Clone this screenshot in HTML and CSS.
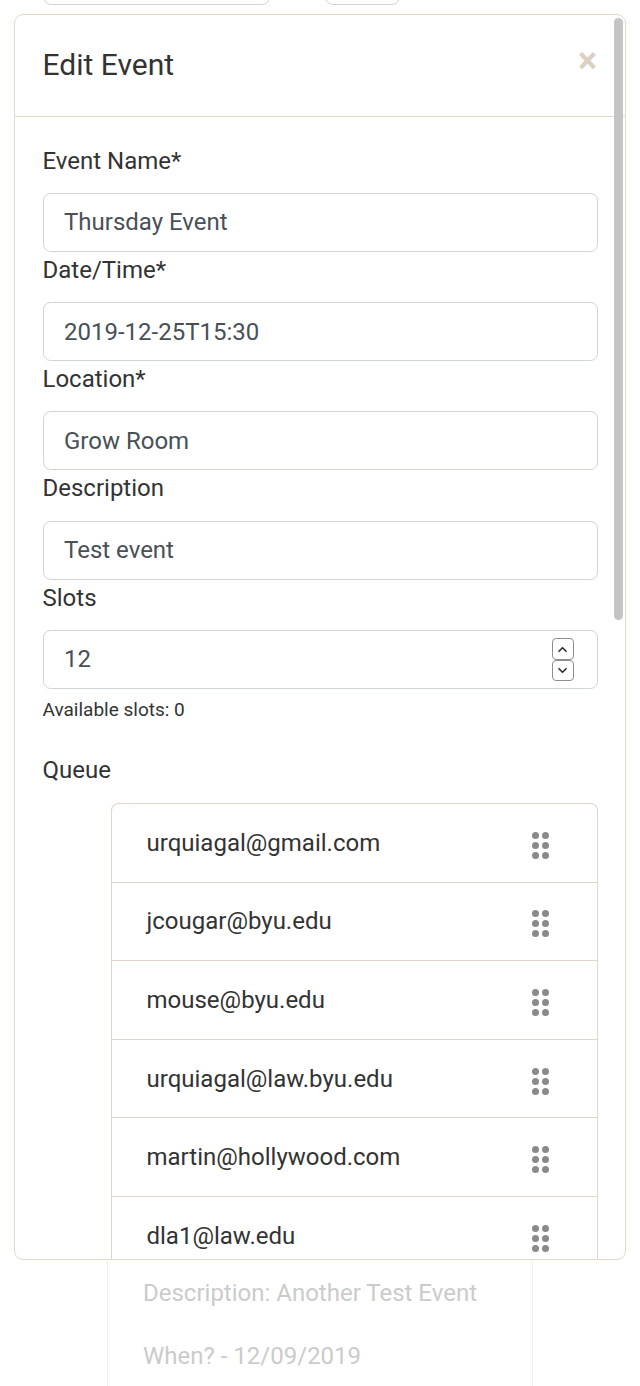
FILE: index.html
```html
<!DOCTYPE html>
<html lang="en">
<head>
<meta charset="utf-8">
<title>Edit Event</title>
<link rel="stylesheet" href="styles.css">
</head>
<body>
<div class="page">
  <div class="bg-top">
    <div class="bg-box bg-box-wide"></div>
    <div class="bg-box bg-box-small"></div>
  </div>
  <div class="bg-card">
    <p>Description: Another Test Event</p>
    <p>When? - 12/09/2019</p>
  </div>

  <div class="modal">
    <div class="modal-header">
      <h5 class="modal-title">Edit Event</h5>
      <span class="close">&times;</span>
    </div>
    <div class="modal-body">
      <label class="field-label">Event Name*</label>
      <input class="field-input" type="text" value="Thursday Event">
      <label class="field-label">Date/Time*</label>
      <input class="field-input" type="text" value="2019-12-25T15:30">
      <label class="field-label">Location*</label>
      <input class="field-input" type="text" value="Grow Room">
      <label class="field-label">Description</label>
      <input class="field-input" type="text" value="Test event">
      <label class="field-label">Slots</label>
      <div class="num-field">
        <input class="num-input" type="text" value="12">
        <div class="spinner">
          <span class="spin-btn">
            <svg viewBox="0 0 12 8" width="11" height="7"><path d="M2 6 L6 2 L10 6" fill="none" stroke="#333" stroke-width="2" stroke-linecap="round" stroke-linejoin="round"/></svg>
          </span>
          <span class="spin-btn">
            <svg viewBox="0 0 12 8" width="11" height="7"><path d="M2 2 L6 6 L10 2" fill="none" stroke="#333" stroke-width="2" stroke-linecap="round" stroke-linejoin="round"/></svg>
          </span>
        </div>
      </div>
      <small class="help">Available slots: 0</small>

      <label class="field-label queue-label">Queue</label>
      <ul class="queue">
        <li class="queue-item"><span>urquiagal@gmail.com</span><span class="handle"><i></i><i></i><i></i><i></i><i></i><i></i></span></li>
        <li class="queue-item"><span>jcougar@byu.edu</span><span class="handle"><i></i><i></i><i></i><i></i><i></i><i></i></span></li>
        <li class="queue-item"><span>mouse@byu.edu</span><span class="handle"><i></i><i></i><i></i><i></i><i></i><i></i></span></li>
        <li class="queue-item"><span>urquiagal@law.byu.edu</span><span class="handle"><i></i><i></i><i></i><i></i><i></i><i></i></span></li>
        <li class="queue-item"><span>martin@hollywood.com</span><span class="handle"><i></i><i></i><i></i><i></i><i></i><i></i></span></li>
        <li class="queue-item"><span>dla1@law.edu</span><span class="handle"><i></i><i></i><i></i><i></i><i></i><i></i></span></li>
      </ul>
    </div>
    <div class="scroll-thumb"></div>
  </div>
</div>
</body>
</html>
```

FILE: styles.css
```css
* { box-sizing: border-box; }

html, body {
  margin: 0;
  padding: 0;
  background: #fff;
}

body {
  font-family: Roboto, "Liberation Sans", Arial, sans-serif;
  color: #333;
}

.page {
  position: relative;
  width: 640px;
  height: 1386px;
  overflow: hidden;
}

/* background page (behind the modal) */
.bg-top {
  height: 5px;
  display: flex;
  align-items: flex-end;
  overflow: hidden;
  padding-left: 43px;
  gap: 55px;
}

.bg-box {
  flex: none;
  height: 40px;
  border: 1.5px solid #cdd5e0;
  border-radius: 8px;
}

.bg-box-wide { width: 227px; }
.bg-box-small { width: 75px; }

.bg-card {
  margin: 1250px 0 0 107px;
  width: 426px;
  height: 200px;
  border: 1px solid #f1f1f1;
  padding: 19px 0 0 35px;
}

.bg-card p {
  margin: 0 0 27px;
  font-size: 24px;
  line-height: 36px;
  color: #cbcbcb;
}

/* modal */
.modal {
  position: absolute;
  top: 14px;
  left: 14px;
  width: 612px;
  height: 1246px;
  background: #fff;
  border: 1.5px solid #e3d9c9;
  border-radius: 9px;
  overflow: hidden;
}

.modal-header {
  height: 101.5px;
  border-bottom: 1.5px solid #e3d9c9;
  display: flex;
  align-items: center;
  justify-content: space-between;
  padding: 0 27px 0 27.5px;
}

.modal-title {
  margin: -2px 0 0;
  font-size: 30px;
  font-weight: 400;
  line-height: 45px;
  color: #333;
}

.close {
  font-size: 36px;
  font-weight: 700;
  line-height: 1;
  color: #dad1c3;
  margin-top: -8px;
  margin-right: 1px;
}

.modal-body {
  padding: 26px 27.5px 0;
  display: flex;
  flex-direction: column;
}

.field-label {
  display: block;
  font-size: 24px;
  line-height: 36px;
  margin-bottom: 14.25px;
  color: #333;
}

.field-input {
  display: block;
  width: 100%;
  height: 59px;
  border: 1.5px solid #ced4da;
  border-radius: 7.5px;
  padding: 0 20.5px;
  font-family: Roboto, "Liberation Sans", Arial, sans-serif;
  font-size: 24px;
  color: #495057;
  background: #fff;
  outline: none;
}

.num-field {
  display: flex;
  align-items: center;
  width: 100%;
  height: 59px;
  border: 1.5px solid #ced4da;
  border-radius: 7.5px;
  padding: 0 23px 0 20.5px;
}

.num-input {
  flex: 1;
  min-width: 0;
  border: 0;
  padding: 0;
  font-family: Roboto, "Liberation Sans", Arial, sans-serif;
  font-size: 24px;
  color: #495057;
  outline: none;
  background: transparent;
}

.spinner {
  display: flex;
  flex-direction: column;
  margin-top: 1px;
}

.spin-btn {
  width: 22px;
  height: 21.5px;
  border: 1.5px solid #8e8e8e;
  border-radius: 4px;
  display: flex;
  align-items: center;
  justify-content: center;
  background: #fff;
}

.help {
  display: block;
  margin-top: 6px;
  font-size: 19px;
  line-height: 29px;
  color: #333;
}

.queue-label {
  margin-top: 28px;
}

.queue {
  list-style: none;
  margin: 1px 0 0 68px;
  padding: 0;
  border: 1.5px solid #e0d7c9;
  border-bottom: 0;
  border-radius: 7.5px 7.5px 0 0;
}

.queue-item {
  height: 78.6px;
  border-bottom: 1.5px solid #e0d7c9;
  display: flex;
  align-items: center;
  justify-content: space-between;
  padding: 0 47.5px 0 35px;
  font-size: 24px;
  color: #333;
}

.handle {
  display: grid;
  grid-template-columns: 7px 7px;
  grid-auto-rows: 7px;
  gap: 3px;
  margin-top: 5px;
}

.handle i {
  display: block;
  width: 7px;
  height: 7px;
  border-radius: 50%;
  background: #8a8a8a;
}

.scroll-thumb {
  position: absolute;
  top: 3px;
  right: 2px;
  width: 9px;
  height: 602px;
  border-radius: 5px;
  background: #c4c4c4;
}
```
